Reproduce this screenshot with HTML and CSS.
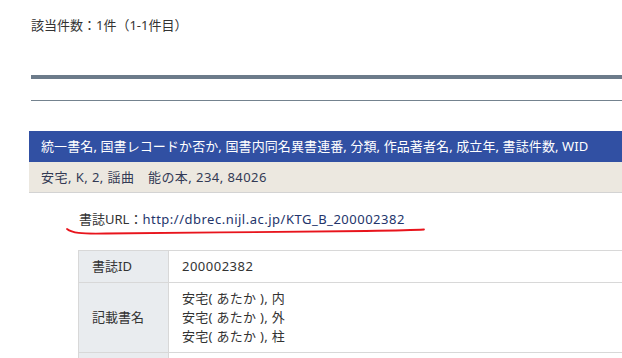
FILE: index.html
```html
<!DOCTYPE html>
<html lang="ja">
<head>
<meta charset="utf-8">
<link rel="stylesheet" href="styles.css">
</head>
<body>
<div class="page">
  <p class="count">該当件数：1件（1-1件目）</p>
  <div class="rule-thick"></div>
  <div class="rule-thin"></div>
  <section class="result">
    <div class="result-head">統一書名, 国書レコードか否か, 国書内同名異書連番, 分類, 作品著者名, 成立年, 書誌件数, WID</div>
    <div class="result-sub">安宅, K, 2, 謡曲　能の本, 234, 84026</div>
    <div class="url-wrap">
      <p class="url">書誌URL：<a class="url-link">http://dbrec.nijl.ac.jp/KTG_B_200002382</a></p>
      <svg class="scribble" width="362" height="12" viewBox="0 0 362 12">
        <path d="M1 5 C 6 9, 14 10, 40 9.5 C 120 8.5, 230 8, 300 7 C 330 6.5, 350 6, 358 5.5" fill="none" stroke="#e8141c" stroke-width="1.8" stroke-linecap="round"/>
      </svg>
    </div>
    <table class="detail">
      <tr><th>書誌ID</th><td class="num">200002382</td></tr>
      <tr><th>記載書名</th><td>安宅( あたか ), 内<br>安宅( あたか ), 外<br>安宅( あたか ), 柱</td></tr>
      <tr><th>&nbsp;</th><td>&nbsp;</td></tr>
    </table>
  </section>
</div>
</body>
</html>
```
FILE: styles.css
```css
html, body {
  margin: 0;
  padding: 0;
  background: #fff;
}
body {
  font-family: "Noto Sans", "Noto Sans CJK JP", sans-serif;
  font-size: 13px;
  color: #333;
  overflow: hidden;
}
.page {
  padding-top: 16px;
}
.count {
  margin: 0 0 0 31px;
  line-height: 19px;
  color: #333;
}
.rule-thick {
  margin: 40px 0 0 31px;
  height: 4px;
  background: #6c7b8a;
}
.rule-thin {
  margin: 21px 0 0 31px;
  height: 1px;
  background: #74838f;
}
.result {
  margin: 30px 0 0 29px;
}
.result-head {
  background: #3150a3;
  color: #fff;
  height: 31px;
  line-height: 30px;
  padding-left: 12px;
  white-space: nowrap;
  letter-spacing: 0.1px;
}
.result-sub {
  background: #ece8e0;
  color: #333a55;
  height: 30px;
  line-height: 30px;
  padding-left: 12px;
  border-bottom: 1px solid #d3d3d3;
  letter-spacing: 0.45px;
}
.url-wrap {
  position: relative;
  margin: 17px 0 0 37px;
  height: 40px;
}
.url {
  margin: 0 0 0 13px;
  line-height: 19px;
  color: #333;
}
.url-link {
  color: #23346b;
  letter-spacing: 0.5px;
}
.scribble {
  position: absolute;
  left: 0;
  top: 14px;
}
.detail {
  margin-left: 49px;
  width: calc(100% - 49px);
  border-collapse: collapse;
  border: 1px solid #d8d8d8;
  border-right: none;
}
.detail th, .detail td {
  border: 1px solid #d8d8d8;
  border-right: none;
  text-align: left;
  font-weight: normal;
  padding: 6px 13px;
  line-height: 19px;
  vertical-align: middle;
}
.detail th {
  width: 63px;
  background: #e9ecef;
  color: #333;
  border-right: 1px solid #d8d8d8;
}
.detail td {
  color: #333;
  letter-spacing: 0.3px;
}
.detail td.num {
  letter-spacing: 0.5px;
}
```
